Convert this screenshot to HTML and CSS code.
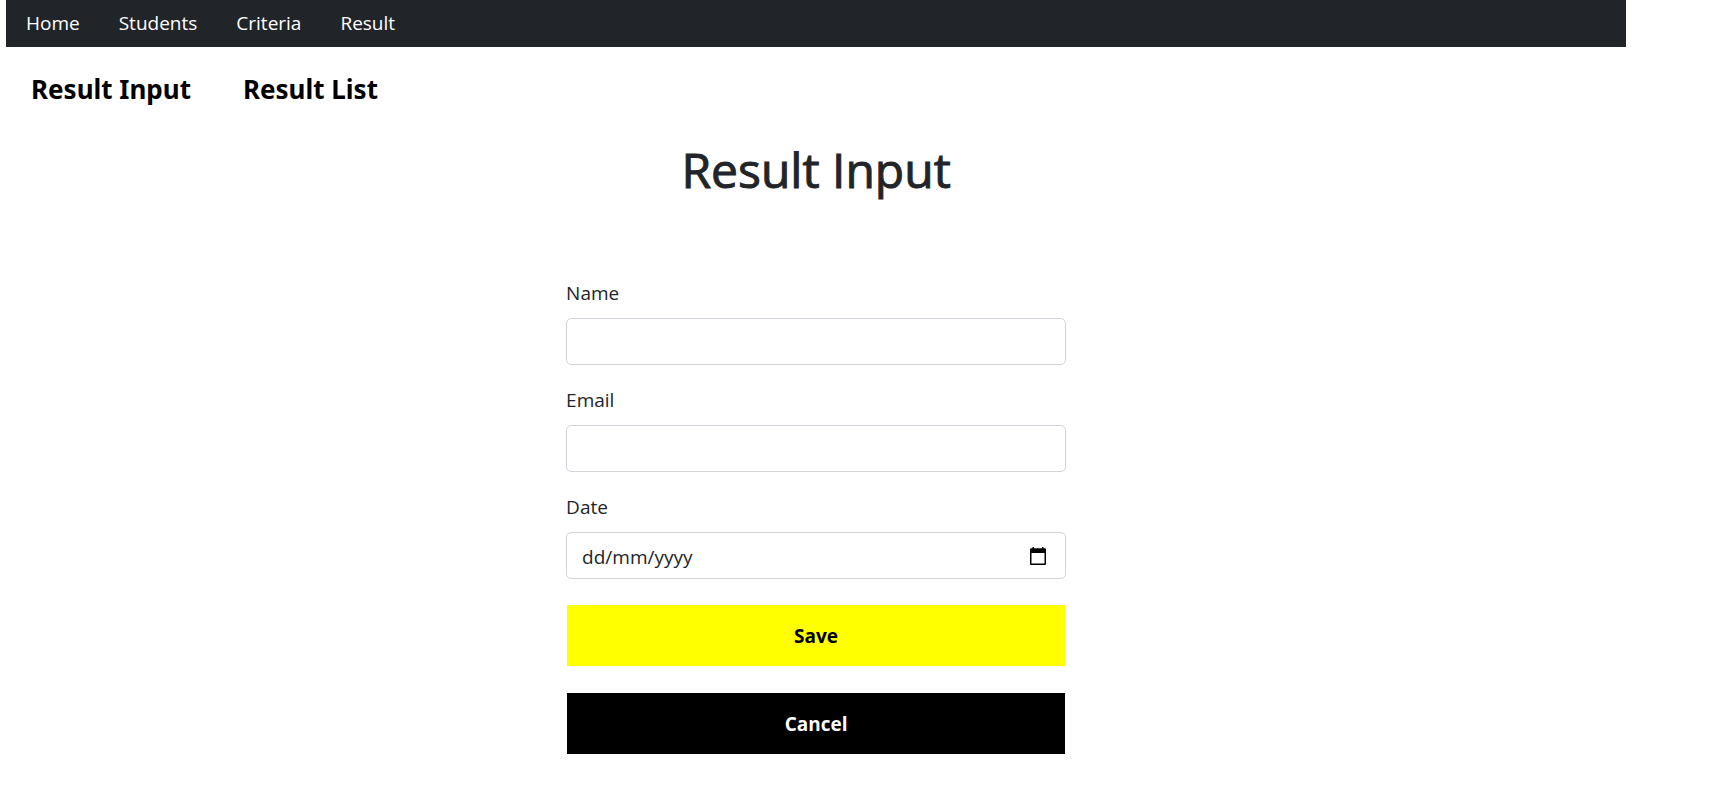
FILE: index.html
```html
<!DOCTYPE html>
<html lang="en-GB">
<head>
  <meta charset="utf-8">
  <meta name="viewport" content="width=device-width, initial-scale=1">
  <title>Result Input</title>
  <link rel="stylesheet" href="styles.css">
</head>
<body>
  <div class="page">
    <nav class="navbar" aria-label="Main">
      <a class="nav-link" href="#home">Home</a>
      <a class="nav-link" href="#students">Students</a>
      <a class="nav-link" href="#criteria">Criteria</a>
      <a class="nav-link" href="#result">Result</a>
    </nav>
    <nav class="subnav" aria-label="Result">
      <a class="subnav-link" href="#result-input">Result Input</a>
      <a class="subnav-link" href="#result-list">Result List</a>
    </nav>
    <main class="content">
      <h1 class="title">Result Input</h1>
      <form class="form">
        <div class="field">
          <label class="label" for="name">Name</label>
          <input class="control" id="name" type="text">
        </div>
        <div class="field">
          <label class="label" for="email">Email</label>
          <input class="control" id="email" type="email">
        </div>
        <div class="field">
          <label class="label" for="date">Date</label>
          <div class="control date-control">
            <input class="date-input" id="date" type="text" placeholder="dd/mm/yyyy">
            <button class="date-button" type="button" aria-label="Show date picker">
              <svg class="date-icon" viewBox="0 0 16 18" aria-hidden="true">
                <path fill="#000" fill-rule="evenodd" d="M2.500 0H4v1.200h8V0h1.500v1.200H15a1 1 0 0 1 1 1V17a1 1 0 0 1-1 1H1a1 1 0 0 1-1-1V2.200a1 1 0 0 1 1-1h1.500zM1.500 6v10.500h13V6z"/>
              </svg>
            </button>
          </div>
        </div>
        <button class="button button-save" type="submit">Save</button>
        <button class="button button-cancel" type="button">Cancel</button>
      </form>
    </main>
  </div>
</body>
</html>
```
FILE: styles.css
```css
* {
  box-sizing: border-box;
}

body {
  margin: 0;
  background: #fff;
  color: #212529;
  font-family: "Open Sans", "Noto Sans", sans-serif;
  font-size: 19px;
  line-height: 30px;
}

.page {
  margin: 0 6% 0 6px;
}

.navbar {
  display: flex;
  flex-wrap: wrap;
  gap: 0 39px;
  padding: 8px 20px 9px;
  background: #212529;
}

.nav-link {
  color: #fff;
  text-decoration: none;
}

.subnav {
  display: flex;
  flex-wrap: wrap;
  gap: 0 52px;
  padding: 23px 25px 0;
}

.subnav-link {
  color: #000;
  font-family: "Noto Sans", sans-serif;
  font-size: 26px;
  font-weight: 700;
  line-height: 38px;
  text-decoration: none;
}

.content {
  padding: 32px 20px 40px;
}

.title {
  margin: 0 0 78px;
  font-size: 48px;
  font-weight: 500;
  line-height: 60px;
  text-align: center;
  -webkit-text-stroke: 1px #212529;
}

.form {
  display: flex;
  flex-direction: column;
  max-width: 500px;
  margin: 0 auto;
}

.field {
  display: flex;
  flex-direction: column;
  gap: 10px;
  margin-bottom: 20px;
}

.control {
  width: 100%;
  height: 47px;
  padding: 0 15px;
  border: 1px solid #ced4da;
  border-radius: 5px;
  background: #fff;
  color: inherit;
  font: inherit;
}

.date-control {
  display: flex;
  align-items: center;
}

.date-input {
  flex: 1;
  min-width: 0;
  padding: 2px 0 0;
  border: 0;
  outline: 0;
  background: transparent;
  color: inherit;
  font: inherit;
}

.date-input::placeholder {
  color: #212529;
  opacity: 1;
}

.date-button {
  display: flex;
  padding: 4px;
  border: 0;
  background: transparent;
}

.date-icon {
  width: 16px;
  height: 18px;
}

.button {
  height: 61px;
  margin: 6px 1px 21px;
  border: 0;
  font: inherit;
  font-weight: 700;
}

.button-save {
  background: #ff0;
  color: #000;
}

.button-cancel {
  background: #000;
  color: #fff;
}
```
